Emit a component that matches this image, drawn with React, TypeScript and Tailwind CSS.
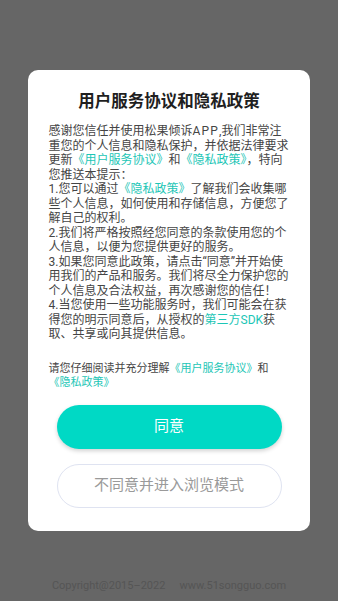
import React from "react";

const font = { fontFamily: '"Roboto", "Noto Sans CJK SC", sans-serif' };

export default function App() {
  const L = ({ children }: { children: React.ReactNode }) => (
    <span className="text-[#1cc6b6]">{children}</span>
  );
  return (
    <div
      className="w-[338px] h-[601px] bg-[#666666] flex flex-col items-center overflow-hidden"
      style={font}
    >
      <div className="mt-[70px] w-[282px] bg-white rounded-[10px] pt-[21px] pb-[23px] flex flex-col items-center">
        <div className="text-[16.5px] leading-[22px] font-bold text-[#1f1f1f]">
          用户服务协议和隐私政策
        </div>
        <div className="mt-[11px] w-[241px] text-[12px] leading-[14.5px] text-[#454545]">
          <p>
            感谢您信任并使用松果倾诉<span className="tracking-[1.2px]">APP</span>,我们非常注重您的个人信息和隐私保护，并依据法律要求更新<L>《用户服务协议》</L>和<L>《隐私政策》</L>，特向您推送本提示：
          </p>
          <p>
            1.您可以通过<L>《隐私政策》</L>了解我们会收集哪些个人信息，如何使用和存储信息，方便您了解自己的权利。
          </p>
          <p>2.我们将严格按照经您同意的条款使用您的个人信息，以便为您提供更好的服务。</p>
          <p>
            3.如果您同意此政策，请点击“同意”并开始使用我们的产品和服务。我们将尽全力保护您的个人信息及合法权益，再次感谢您的信任！
          </p>
          <p>
            4.当您使用一些功能服务时，我们可能会在获得您的明示同意后，从授权的<L>第三方SDK</L>获取、共享或向其提供信息。
          </p>
        </div>
        <div className="mt-[20px] w-[241px] text-[11px] leading-[14px] text-[#454545]">
          请您仔细阅读并充分理解<L>《用户服务协议》</L>和<L>《隐私政策》</L>
        </div>
        <button className="mt-[15px] w-[225px] h-[44px] rounded-full bg-[#00d9c5] text-white text-[15px] shadow-[0_2px_4px_rgba(0,0,0,0.18)]">
          同意
        </button>
        <button className="mt-[15px] w-[225px] h-[44px] rounded-full bg-white border border-[#dfe3f1] text-[#9a9a9a] text-[15px]">
          不同意并进入浏览模式
        </button>
      </div>
      <div className="mt-[48px] text-[11px] leading-[14px] text-[#555555] flex gap-[14px]">
        <span>Copyright@2015–2022</span>
        <span>www.51songguo.com</span>
      </div>
    </div>
  );
}
